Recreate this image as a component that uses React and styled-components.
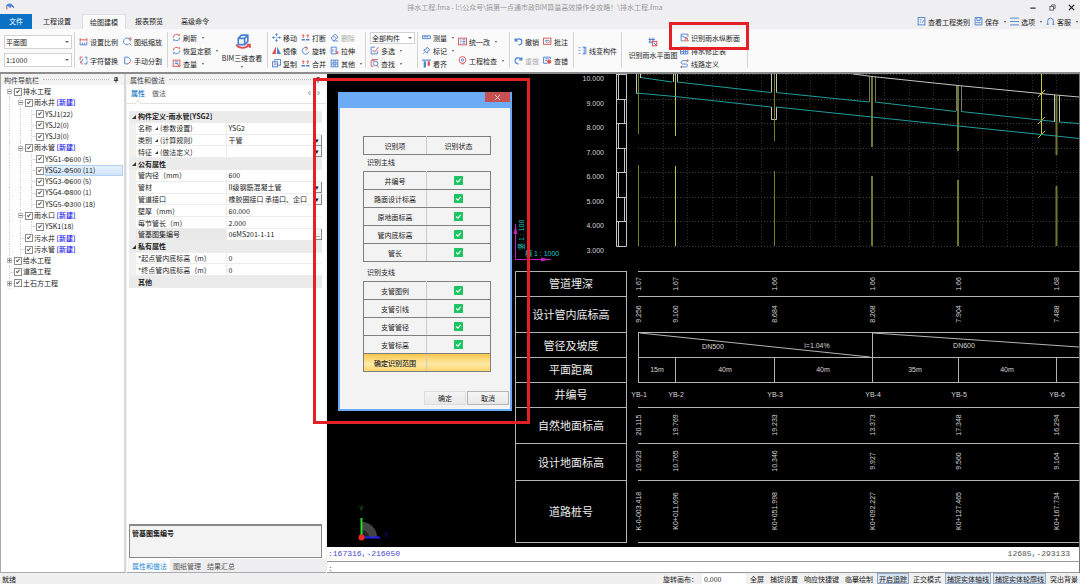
import React from "react";
import styled, { createGlobalStyle, css } from "styled-components";

const Global = createGlobalStyle`
  *, *::before, *::after { box-sizing: border-box; }
  body { margin: 0; background: #f1f1f2; }
  body, button, input, select, table {
    font-family: "Noto Sans CJK SC", "Noto Sans", sans-serif;
    font-size: 7px; line-height: 10px; color: #222;
  }
  button { background: none; border: 0; padding: 0; margin: 0; white-space: nowrap; }
`;

/* ---------- shell ---------- */
const Window = styled.div`
  min-height: 100vh; display: flex; flex-direction: column; position: relative;
`;
const TitleBar = styled.header`
  height: 14px; display: grid; grid-template-columns: 1fr auto 1fr; align-items: center;
  padding: 0 5px; background: #efeff1;
`;
const Title = styled.h1`
  margin: 0 10px 0 0; font-size: 7px; font-weight: 400; line-height: 14px; color: #999; white-space: nowrap;
`;
const WindowControls = styled.div`
  display: flex; justify-content: flex-end; gap: 11px;
  button { width: 8px; height: 10px; display: grid; place-items: center; }
`;
const TabBar = styled.nav`
  height: 15px; display: flex; align-items: stretch; background: #efeff1;
`;
const MenuTab = styled.button`
  width: ${(p) => p.$w}px; line-height: 15px; text-align: center;
  ${(p) => p.$kind === "file" && css`background: #0a72c5; color: #fff;`}
  ${(p) => p.$kind === "active" && css`background: #fafafb; border: 1px solid #dfdfe1; border-bottom: 0; line-height: 14px;`}
`;
const QuickActions = styled.div`
  margin-left: auto; display: flex; align-items: center; gap: 4px; padding-right: 2px;
`;
const Caret = styled.span`
  display: inline-block; border: 1px solid transparent; border-top: 2px solid #555; border-bottom: 0;
  margin-left: ${(p) => p.$gap ?? 3}px; align-self: center;
`;

/* ---------- ribbon ---------- */
const Ribbon = styled.div`
  height: 45px; display: flex; background: #fafafb; border-bottom: 2px solid #8c8c8c;
`;
const Group = styled.div`
  position: relative; width: ${(p) => p.$w}px; flex: none; display: flex; align-items: flex-start;
  padding: 0 0 0 4px;
  &::after { content: ""; position: absolute; right: 0; top: 3px; height: 36px; border-right: 1px solid #d4d4d6; }
`;
const ToolGrid = styled.div`
  display: grid; grid-template-columns: ${(p) => p.$cols || "auto"};
  grid-auto-rows: ${(p) => (p.$rows === 3 ? 13 : 19)}px;
  padding-top: ${(p) => (p.$rows === 3 ? 2 : 3)}px;
  width: ${(p) => (p.$w ? p.$w + "px" : "auto")};
`;
const ToolButton = styled.button`
  display: flex; align-items: center; gap: 2px; color: ${(p) => (p.$dim ? "#aaa" : "#222")};
  svg { flex: none; }
`;
const BigTool = styled.button`
  width: ${(p) => p.$w}px; flex: none; display: flex; flex-direction: column; align-items: center; gap: ${(p) => p.$gap}px;
  padding-top: ${(p) => p.$top}px;
`;
const Selects = styled.div`
  display: flex; flex-direction: column; gap: 4px; padding-top: 6px; flex: 1; margin-right: 2px;
`;
const SelectBox = styled.span`
  position: relative; display: block; width: ${(p) => p.$w || "68px"}; margin-top: ${(p) => p.$top || 0}px;
  select {
    appearance: none; display: block; width: 100%; height: ${(p) => p.$h || 14}px; border: 1px solid #d2d2d4;
    border-radius: 0; background: #fff; padding: 0 1px; outline: 0;
  }
  &::after {
    content: ""; position: absolute; right: 3px; top: 45%; border: 2px solid transparent;
    border-top-color: #666; border-bottom: 0; pointer-events: none;
  }
`;
const Mark = styled.div`
  position: absolute; left: ${(p) => p.$x}px; top: ${(p) => p.$y}px; width: ${(p) => p.$w}px; height: ${(p) => p.$h}px;
  border: 3px solid #e51f26; pointer-events: none; z-index: 5;
`;

/* ---------- workspace ---------- */
const Workspace = styled.main`
  flex: 1; display: grid; grid-template-columns: 127px 200px minmax(0, 1fr);
`;
const PanelHead = styled.h2`
  margin: 0; height: 11px; display: flex; align-items: center; gap: 4px; padding: 0 5px 0 3px;
  font-size: 7px; font-weight: 400; line-height: 10px; background: #f2f2f3; white-space: nowrap; color: #444;
  &::before { content: ""; order: 1; flex: 1; border-top: 1px dotted #bbb; }
  svg { order: 2; }
`;
const TreePanel = styled.section`
  background: #fff; border: solid #aaa; border-width: 0 2px 1px 1px; border-right-color: #d5d8dc; margin-right: 1px;
`;
const Tree = styled.ul`
  margin: 0; padding: 1px 0 0; list-style: none; height: 204px; display: grid; grid-auto-rows: 1fr;
`;
const TreeRow = styled.li`
  position: relative; display: flex; align-items: center; white-space: nowrap;
  padding-left: ${(p) => 13 + p.$level * 11}px;
  &::before {
    content: ""; position: absolute; left: ${(p) => 8 + p.$level * 11}px; top: 0; bottom: 0; width: 5px;
    border-left: 1px dotted #d0d0d0;
    background: linear-gradient(#dcdcdc, #dcdcdc) center / 100% 1px no-repeat;
  }
`;
const Guide = styled.i`
  position: absolute; top: 0; bottom: 0; left: ${(p) => 8 + p.$n * 11}px; border-left: 1px dotted #d0d0d0;
`;
const Expander = styled.button`
  && { position: absolute; left: ${(p) => 6 + p.$level * 11}px; }
  width: 5px; height: 5px; border: 1px solid #bbb; background: #fff; z-index: 1;
  &::before { content: ""; position: absolute; left: 0; right: 0; top: 1px; border-top: 1px solid #777; }
  ${(p) => !p.$open && css`&::after { content: ""; position: absolute; top: 0; bottom: 0; left: 1px; border-left: 1px solid #777; }`}
`;
const NodeLabel = styled.label`
  display: flex; align-items: center; flex: 1; gap: 1px; height: 100%;
  span { flex: 1; display: block; height: 100%; line-height: 11px; margin-right: 1px;
    ${(p) => p.$on && css`background: linear-gradient(#e6f1fc, #cfe4fa); box-shadow: inset 0 0 0 1px #b3d2f2;`} }
  b { color: #1414ee; font-weight: 500; }
`;
const Check = styled.input.attrs({ type: "checkbox" })`
  appearance: none; margin: 0; width: 8px; height: 8px; border: 1px solid #8c8c8c; background: #fff; position: relative; flex: none;
  &:checked::after {
    content: ""; position: absolute; left: 2px; top: 0; width: 2px; height: 4px;
    border: solid #555; border-width: 0 1px 1px 0; transform: rotate(40deg);
  }
`;
const PropPanel = styled.section`
  background: #fff; display: flex; flex-direction: column; border-bottom: 1px solid #aaa; margin-right: 1px;
`;
const PropTabs = styled.div`
  height: 19px; display: flex; align-items: flex-start; gap: 7px; padding: 3px 4px 0; margin-bottom: 7px;
  border-bottom: 1px solid #e2e2e2; position: relative;
  &::after {
    content: ""; position: absolute; left: 8px; bottom: -4px; width: 6px; height: 6px; background: #fff;
    border: solid #e2e2e2; border-width: 1px 0 0 1px; transform: rotate(45deg);
  }
  button { color: #555; }
  button[aria-selected="true"] { color: #1479c9; font-weight: 500; }
  span { margin-left: auto; display: flex; gap: 4px; padding-top: 2px; }
`;
const PropTable = styled.table`
  width: 193px; height: 177px; margin-left: 2px; border-collapse: separate; border-spacing: 0; table-layout: fixed;
  th, td {
    padding: 0; text-align: left; font-weight: 400; line-height: 10px; white-space: nowrap;
    border-bottom: 1px solid #ececec;
  }
  th { width: 96px; border-left: 7px solid #f0f0f0; padding-left: 2px; }
  td { border-left: 1px solid #ececec; padding-left: 2px; position: relative; }
`;
const SectionRow = styled.tr`
  && { background: #ebebec; }
  && th { font-weight: 600; border-left: 0; padding-left: 9px; position: relative; }
  && th::before {
    content: ""; position: absolute; left: 3px; top: 4px; border-top: 4px solid transparent;
    border-right: 4px solid #333; display: ${(p) => (p.$bare ? "none" : "block")};
  }
`;
const PropRow = styled.tr`
  && th { background: ${(p) => (p.$on ? "#e9e9ea" : "#fff")}; }
`;
const Tri = styled.i`
  display: inline-block; border-top: 3px solid transparent; border-right: 3px solid #333; margin: 0 2px 1px 3px;
`;
const CellButton = styled.button`
  && { position: absolute; right: 0; top: 0; width: 9px; height: 11px; background: #f4f4f4; }
  border: solid #888; border-width: 0 1px 1px 0; line-height: 8px; font-size: 7px;
`;
const HelpBox = styled.div`
  margin: auto 4px 1px 2px; height: 34px; flex: none; background: #f3f3f4; border: 1px solid #8a8a8a;
  border-top-width: 2px; padding: 2px; font-weight: 600;
`;
const DockTabs = styled.div`
  height: 13px; display: flex; background: #eeeef0; padding-left: 1px; margin-left: 1px;
  button { padding: 0 3px; color: #555; }
  button[aria-selected="true"] { background: #fff; color: #1a87d0; }
`;

/* ---------- drawing area ---------- */
const CanvasColumn = styled.section`
  position: relative; display: flex; flex-direction: column; background: #000; min-width: 0; border-right: 1px solid #777;
`;
const Drawing = styled.svg`
  display: block; width: 100%; flex: 1; min-height: 0;
  text { font-family: "Liberation Sans", "Noto Sans CJK SC", sans-serif; font-size: 7px; fill: #d6d6d6; }
  .caption { font-family: "Noto Sans CJK SC", sans-serif; font-size: 11px; fill: #eee; }
`;
const CommandLine = styled.div`
  height: ${(p) => p.$h}px; background: #fff; border-bottom: 1px solid #999; display: flex; justify-content: space-between;
  padding: 1px 9px 0 1px; font-family: "Liberation Mono", monospace; font-size: 8px; line-height: 11px; color: #555;
  output:first-child, label { color: #4a4ad0; }
  label { display: flex; flex: 1; }
  input { border: 0; padding: 0; flex: 1; outline: 0; height: 9px; }
`;
const StatusBar = styled.footer`
  height: 11px; display: flex; align-items: center; background: #f0f0f1; padding: 0 0 0 2px; white-space: nowrap; gap: 2px;
  label { margin-left: auto; display: flex; align-items: center; gap: 4px; }
  input { width: 44px; height: 10px; border: 0; background: #fff; padding: 0 2px; }
`;
const StatusButton = styled.button`
  height: 11px; padding: 0 2px; line-height: 10px; flex: none;
  ${(p) => p.$on && css`background: #d8e4f0; box-shadow: inset 0 0 0 1px #91a9c4;`}
`;

/* ---------- dialog ---------- */
const Dialog = styled.section`
  position: absolute; left: 11px; top: 18px; width: 174px; background: #f3f3f4; border: solid #6baaf4;
  border-width: 0 2px 2px; z-index: 3; padding-bottom: 4px;
  display: flex; flex-direction: column;
`;
const DialogBar = styled.div`
  height: 16px; background: #6cabf6; display: flex; justify-content: flex-end; margin-bottom: 28px;
`;
const Close = styled.button`
  && { width: 25px; height: 10px; background: #c75052; color: #fff; display: grid; place-items: center; }
`;
const ResultTable = styled.table`
  margin: 0 19px 0 23px; border-collapse: collapse; table-layout: fixed;
  th, td { padding: 0; height: 18px; border: 1px solid #808080; border-left-color: #ccc; border-right-color: #ccc;
    text-align: center; font-weight: 400; color: #222; line-height: 10px; }
  tr > :first-child { border-left-color: #808080; width: 63px; }
  tr > :last-child { border-right-color: #808080; }
  svg { display: block; margin: 0 auto; }
`;
const RangeRow = styled.tr`
  background: linear-gradient(#fbc64a, #ffe9a8 55%, #fdd262);
  && th { font-weight: 500; }
`;
const Caption = styled.p`
  margin: 0 0 0 27px; height: ${(p) => p.$h}px; line-height: ${(p) => p.$lh}px;
`;
const DialogActions = styled.div`
  display: flex; justify-content: flex-end; gap: 1px; margin-top: 19px; padding-right: 1px;
  button { width: 42px; height: 14px; background: linear-gradient(#f5f5f5, #e9e9e9); border: 1px solid #dcdcdc; }
  button + button { border-color: #b5b5b5; }
`;

/* ---------- icons ---------- */
const B = "#4a80d0";
const R = "#dc4f50";
const shapes = {
  ruler: <><path d="M2 2v6M14 2v6M2 5h12" stroke={R} /><path d="M2 9v5h12V9M6 10v4M10 10v4" stroke={B} /></>,
  zoom: <><path d="M10 13A6 6 0 1 1 13 8" stroke={B} /><path d="M11 11l4 4" stroke={B} /><path d="M14 1v5M11 3l3-2" stroke={R} /></>,
  swap: <><path d="M6 2H2v5M3 13V9M7 14H4" stroke={R} /><path d="M10 2h4v5M14 9v5H9M7 5l-3 7" stroke={B} /></>,
  sheet: <><path d="M9 14H3V2h6l4 4v3" stroke={B} /><path d="M8 14l6-4" stroke={R} /></>,
  refresh: <><path d="M2 8a6 6 0 0 1 11-3V2" stroke={R} /><path d="M14 8a6 6 0 0 1-11 3v3" stroke={B} /></>,
  list: <><rect x="2" y="2" width="12" height="11" stroke={R} /><path d="M5 5h6M5 8h6" stroke={B} /><path d="M9 9l5 5" stroke={R} /></>,
  cube: <><path d="M4 5l3-3h6v6l-3 3H4zM4 5h6v6M10 5l3-3" stroke={B} /><path d="M2 11c3 4 9 4 13 0M12 11h3v3" stroke={R} /></>,
  move: <><path d="M8 1v5M8 10v5M1 8h5M10 8h5M6 3l2-2 2 2M6 13l2 2 2-2M3 6L1 8l2 2M13 6l2 2-2 2" stroke={B} /></>,
  breakk: <><path d="M1 12h6M9 12h6" stroke={B} strokeWidth="3" /><path d="M4 9V3M2 5l2-2 2 2M12 9V3M10 5l2-2 2 2" stroke={R} /></>,
  eraser: <><path d="M2 9l7-7 5 5-6 6H5zM6 5l5 5M5 14h9" stroke={B} /></>,
  mirror: <><path d="M7 1v13H0z" fill={R} stroke="none" /><path d="M9 1v13h7z" fill={B} stroke="none" /></>,
  rotate: <><path d="M12 4a6 6 0 1 0 2 6" stroke={B} /><path d="M8 1l4 3-4 3" stroke={R} /></>,
  stretch: <><path d="M2 2h9v12H2zM5 5v6" stroke={B} /><path d="M9 8l5 5M14 9v4h-4" stroke={R} /></>,
  copy: <><rect x="5" y="1" width="10" height="10" stroke={B} /><rect x="1" y="5" width="9" height="9" stroke={B} fill="#dce8f8" /><path d="M4 9h4" stroke={R} /></>,
  grid: <><rect x="2" y="2" width="5" height="5" stroke={B} /><rect x="9" y="2" width="5" height="5" stroke={B} /><rect x="2" y="9" width="5" height="5" stroke={B} /><rect x="9" y="9" width="5" height="5" stroke={B} /></>,
  select: <><path d="M9 2H2v12h11V9" stroke={B} /><path d="M5 7l3 4 7-9" stroke={R} /></>,
  find: <><path d="M8 3H2v10h4" stroke={R} /><circle cx="10" cy="8" r="4" stroke={B} /><path d="M12 11l3 4M3 1h11" stroke={R} /></>,
  measure: <><path d="M1 5h14v5H1zM4 5v3M7 5v3M10 5v3" stroke={B} /></>,
  pin: <><path d="M9 2l5 5-3 1-2 5-6-6 5-2zM5 11l-3 3" stroke={B} /></>,
  align: <><path d="M0 2h16" stroke={B} strokeWidth="2" /><path d="M5 4v11" stroke={B} strokeWidth="4" /><path d="M12 4v8" stroke={R} strokeWidth="4" /></>,
  unify: <><rect x="1" y="2" width="14" height="12" stroke={R} /><path d="M4 5h2M8 5h5M4 8h2M8 8h5M4 11h2M8 11h5" stroke={B} /></>,
  inspect: <><circle cx="8" cy="7" r="6" stroke={R} /><circle cx="8" cy="7" r="2" stroke={B} /><path d="M6 14h5" stroke={R} /></>,
  undo: <><path d="M2 7c4-6 12-4 12 1 0 4-3 6-6 6M2 2v5h5" stroke={B} strokeWidth="2" /></>,
  redo: <><path d="M14 7C10 1 2 3 2 8c0 4 3 6 6 6M14 2v5H9" stroke={B} strokeWidth="2" /></>,
  note: <><rect x="1" y="2" width="13" height="11" stroke={R} /><path d="M4 6h7M4 9h4" stroke={B} /><path d="M9 11l5-5" stroke={R} /></>,
  inquiry: <><path d="M8 13H1V2h12v4M4 5h6M4 8h3" stroke={B} /><circle cx="11" cy="10" r="3" fill={R} stroke={R} /></>,
  convert: <><path d="M1 3h4M1 8h4M1 13h4" stroke={B} strokeDasharray="2 1" /><path d="M8 2h6v12H8M11 2v12" stroke={B} /></>,
  plan: <><path d="M1 4h10M3 1v9M8 1v6M1 8h6" stroke={B} /><rect x="7" y="7" width="7" height="7" stroke={R} /><path d="M9 9l4 4" stroke={B} /></>,
  section: <><path d="M7 14H2V2h12v5M2 5l12 5" stroke={B} /><path d="M8 14l3-6 4 6z" stroke={R} /></>,
  table: <><rect x="1" y="2" width="13" height="12" stroke={B} /><path d="M1 6h13M1 10h13M6 2v12M10 2v12" stroke={B} /></>,
  route: <><path d="M14 3H5a3 3 0 0 0 0 6h6a2 2 0 0 1 0 5H2" stroke={B} /><path d="M12 1l3 2-3 2M4 12l-3 2 3 2" stroke={R} /></>,
  category: <><rect x="2" y="1" width="12" height="13" stroke={B} /><path d="M5 5h3M5 9h2M9 10l4-5" stroke={B} /></>,
  save: <><path d="M2 1h12v13H2zM5 1v5h6V1M4 10h8" stroke={B} /></>,
  options: <><path d="M0 2h16M0 8h16M0 14h16" stroke={B} /></>,
  service: <><path d="M3 13V7a5 5 0 0 1 10 0v6M1 13h4M11 13h4" stroke={B} /></>,
  logo: <><path d="M2 7C5 1 12 2 14 9l-4-3-2 3c-1-3-4-3-6-2z" fill={B} stroke={B} /><path d="M3 8v4" stroke={R} /></>,
  min: <path d="M1 11h14" stroke="#222" strokeWidth="3" />,
  restore: <><rect x="2" y="6" width="8" height="8" stroke="#333" /><path d="M6 5V2h8v8h-3" stroke="#333" /></>,
  close: <path d="M2 2l12 12M14 2L2 14" stroke="currentColor" strokeWidth="3" />,
  closeThin: <path d="M2 2l12 12M14 2L2 14" stroke="#fff" />,
  tack: <path d="M5 1h6v8H5zM2 9h12M8 9v6M10 1v8" stroke="#222" strokeWidth="2" />,
  left: <path d="M11 3L5 8l6 5z" stroke="#888" />,
  right: <path d="M5 3l6 5-6 5z" stroke="#888" />,
  tick: <><rect width="16" height="16" rx="1" fill="#1dc45f" stroke="none" /><path d="M4 8l3 3 5-6" stroke="#fff" strokeWidth="2" /></>,
};
const Icon = ({ name, size = 9 }) => (
  <svg width={size} height={size} viewBox="0 0 16 16" fill="none" strokeWidth="1.6" aria-hidden="true">{shapes[name]}</svg>
);
const Tool = ({ icon, label, caret, dim }) => (
  <ToolButton $dim={dim}><Icon name={icon} />{label}{caret && <Caret />}</ToolButton>
);
const Pick = ({ label, value, ...rest }) => (
  <SelectBox {...rest}><select aria-label={label} defaultValue={value}><option>{value}</option></select></SelectBox>
);

/* ---------- data ---------- */
const tree = [
  [0, "排水工程", false, "open"], [1, "雨水井", true, "open"], [2, "YSJ1(22)"], [2, "YSJ2(0)"], [2, "YSJ3(0)"],
  [1, "雨水管", true, "open"], [2, "YSG1-Φ600 (5)"], [2, "YSG2-Φ500 (11)"], [2, "YSG3-Φ600 (5)"], [2, "YSG4-Φ800 (1)"],
  [2, "YSG5-Φ300 (18)"], [1, "雨水口", true, "open"], [2, "YSK1(18)"], [1, "污水井", true], [1, "污水管", true],
  [0, "给水工程", false, "closed"], [0, "道路工程"], [0, "土石方工程", false, "closed"],
];
const props = [
  { section: "构件定义-雨水管[YSG2]" },
  { name: "名称", extra: "(参数设置)", value: "YSG2" },
  { name: "类别", extra: "(计算规则)", value: "干管", button: "▾" },
  { name: "特征", extra: "(做法定义)", value: "", button: "▾" },
  { section: "公有属性" },
  { name: "管内径（mm）", value: "600" },
  { name: "管材", value: "II级钢筋混凝土管", button: "▾" },
  { name: "管道接口", value: "橡胶圈接口 承插口、企口", button: "▾" },
  { name: "壁厚（mm）", value: "60.000" },
  { name: "每节管长（m）", value: "2.000" },
  { name: "管基图集编号", value: "06MS201-1-11", button: "...", on: true },
  { section: "私有属性" },
  { name: "*起点管内底标高（m）", value: "0" },
  { name: "*终点管内底标高（m）", value: "0" },
  { section: "其他", bare: true },
];
const stations = [638, 675, 774, 872, 958, 1056];
const profile = [
  { y: 284, values: ["1.67", "1.67", "1.66", "1.66", "1.66", "1.68"] },
  { y: 314, values: ["9.256", "9.100", "8.684", "8.268", "7.904", "7.488"] },
  { y: 425, values: ["20.115", "19.769", "19.233", "13.373", "17.348", "16.294"] },
  { y: 461, values: ["10.923", "10.765", "10.346", "9.927", "9.560", "9.164"] },
  { y: 511, values: ["K-0-003.418", "K0+011.696", "K0+051.998", "K0+092.227", "K0+127.465", "K0+167.734"] },
];
const captions = [
  ["管道埋深", 284], ["设计管内底标高", 315], ["管径及坡度", 346], ["平面距离", 370], ["井编号", 395],
  ["自然地面标高", 426], ["设计地面标高", 463], ["道路桩号", 512],
];
const rules = [271, 296, 332, 357, 382, 407, 443, 480, 542];
const levels = [74, 99, 123, 148, 172, 197, 221, 246];

const Profile = () => (
  <Drawing viewBox="327 74 752 473" preserveAspectRatio="xMinYMin meet" role="img" aria-label="雨水纵断面">
    <g stroke="#3c3c3c" strokeDasharray="1 2" fill="none">
      {Array.from({ length: 17 }, (_, i) => Math.round(662.6 + i * 24.6)).map((x) => <path key={x} d={`M${x}.5 74V246`} stroke="#2e2e2e" />)}
      {levels.map((y) => <path key={y} d={`M638 ${y}.5H1079`} />)}
    </g>
    <g stroke="#c4c4c4" fill="none">
      <path d="M616.5 74V246.5H626.5V74" />
      {levels.slice(0, 7).map((y, i) => (
        <path key={y} d={`M616.5 ${y}.5H626.5M${i % 2 ? 624.5 : 618.5} ${y}V${levels[i + 1]}`} />
      ))}
      <path d="M636.5 74V93.5H639M640.5 74V78M673.5 74V82M677.5 74V82M771.5 74V92.5M776.5 74V92.5M771.5 107V119.5H776.5V107M1054.5 95V122M1059.5 95V122" />
      <path d="M869.5 77V102M875.5 77V102M956.5 86V111M961.5 86V111" stroke="#777" />
      <path d="M853 74L872 76.5L958 85.5L1056 95L1079 97" />
    </g>
    <g stroke="#7c7c22" strokeWidth="1">
      <path d="M638.5 74V134M638.5 165V246M774.5 74V141M774.5 171V246" />
      <path d="M675.5 74V136M675.5 166V246" stroke="#c2c250" />
      <path d="M872 77V147M872 176V246M958 86V151M958 180V246M1056.5 95V155M1056.5 186V246" strokeWidth="2" stroke="#73762f" />
      <path d="M1041.5 74V135M1038 97L1045 90M1038 124L1045 117M1038 138L1045 131" stroke="#c8c832" />
    </g>
    <g stroke="#229c9c" fill="none">
      <path d="M641 77.5L672 82M677 82L771 92.5M776 92.5L869 102M875 102L956 111.5M961 111.5L1054 121.5M1059 122L1079 123.5" />
      <path d="M636 93L675 96.5L771 107M776 107L872 117L958 126L1056 136L1079 138.5" />
    </g>
    {levels.map((y, i) => <text key={y} x="604" y={y + 7} textAnchor="end">{`${10 - i}.000`}</text>)}

    <g stroke="#c020c0" fill="#c020c0"><path d="M515.5 224V259.5H551" fill="none" /><path d="M515.5 225l2 9h-4zM550 259.5l-9-2v4z" stroke="none" /></g>
    <text transform="translate(524 250) rotate(-90)" style={{ fill: "#20c8c8" }}>竖 1 : 100</text>
    <text x="525" y="256" style={{ fill: "#20c8c8" }}>横 1 : 1000</text>

    <g stroke="#b4b4b4" fill="none">
      <path d="M515.5 271.5V542.5M626.5 271.5V542.5M638.5 332V382M872.5 332V382M675.5 357V382M774.5 357V382M958.5 357V382M1056.5 357V382" />
      {rules.map((y) => <path key={y} d={`M515.5 ${y}.5H627M638 ${y}.5H1079`} />)}
      <path d="M640 333L870 357M873 333L1079 347" />
    </g>
    {captions.map(([t, y]) => <text key={t} className="caption" x="571" y={y + 4} textAnchor="middle">{t}</text>)}
    {profile.map((row) => row.values.map((v, i) => (
      <text key={row.y + v + i} transform={`translate(${stations[i] + 3} ${row.y}) rotate(-90)`} textAnchor="middle">{v}</text>
    )))}
    {stations.map((x, i) => <text key={x} x={x + 1} y="397" textAnchor="middle">{`YB-${i + 1}`}</text>)}
    {[[657, "15m"], [725, "40m"], [823, "40m"], [915, "35m"], [1007, "40m"]].map(([x, t]) => (
      <text key={x} x={x} y="372" textAnchor="middle">{t}</text>
    ))}
    <text x="713" y="349" textAnchor="middle">DN500</text>
    <text x="817" y="348" textAnchor="middle">i=1.04%</text>
    <text x="964" y="348" textAnchor="middle">DN600</text>

    <path d="M362 522a15 15 0 0 1 15 15h-15z" fill="#444" />
    <path d="M362 530a7 7 0 0 1 7 7h-7z" fill="#252525" />
    <path d="M361.5 518V536" stroke="#22dd22" strokeWidth="2" />
    <path d="M363 537.5H380" stroke="#2222f0" strokeWidth="2" />
    <circle cx="361.5" cy="537.5" r="3" fill="#f02a20" />
    <text x="359" y="511" style={{ fill: "#128012" }}>Y</text>
    <text x="384" y="537" style={{ fill: "#101088" }}>X</text>
  </Drawing>
);

const ResultRows = ({ items }) => items.map((t) => (
  <tr key={t}><th scope="row">{t}</th><td aria-label="已识别"><Icon name="tick" /></td></tr>
));

export default function App() {
  return (
    <Window>
      <Global />
      <TitleBar>
        <Icon name="logo" size={10} />
        <Title>排水工程.fma - I:\公众号\搞第一点通市政BIM算量高效操作全攻略！\排水工程.fma</Title>
        <WindowControls>
          <button aria-label="最小化"><Icon name="min" size={6} /></button>
          <button aria-label="还原"><Icon name="restore" size={7} /></button>
          <button aria-label="关闭"><Icon name="close" size={7} /></button>
        </WindowControls>
      </TitleBar>
      <TabBar>
        <MenuTab $w={32} $kind="file">文件</MenuTab>
        <MenuTab $w={50}>工程设置</MenuTab>
        <MenuTab $w={44} $kind="active">绘图建模</MenuTab>
        <MenuTab $w={46}>报表预览</MenuTab>
        <MenuTab $w={46}>高级命令</MenuTab>
        <QuickActions>
          <Tool icon="category" label="查看工程类别" />
          <Tool icon="save" label="保存" caret />
          <Tool icon="options" label="选项" caret />
          <Tool icon="service" label="客服" caret />
        </QuickActions>
      </TabBar>

      <Ribbon>
        <Group $w={75}>
          <Selects>
            <Pick label="视图" value="平面图" />
            <Pick label="比例" value="1:1000" />
          </Selects>
        </Group>
        <Group $w={93}>
          <ToolGrid $cols="44px 44px">
            <Tool icon="ruler" label="设置比例" /><Tool icon="zoom" label="图纸缩放" />
            <Tool icon="swap" label="字符替换" /><Tool icon="sheet" label="手动分割" />
          </ToolGrid>
        </Group>
        <Group $w={100}>
          <ToolGrid $rows={3} $w={48}>
            <Tool icon="refresh" label="刷新" caret />
            <Tool icon="refresh" label="恢复定额" caret />
            <Tool icon="list" label="查量" caret />
          </ToolGrid>
          <BigTool $w={44} $top={4} $gap={3}><Icon name="cube" size={17} />BIM三维查看<Caret $gap={0} /></BigTool>
        </Group>
        <Group $w={98}>
          <ToolGrid $rows={3} $cols="29px 29px 32px">
            <Tool icon="move" label="移动" /><Tool icon="breakk" label="打断" /><Tool icon="eraser" label="删除" dim />
            <Tool icon="mirror" label="镜像" /><Tool icon="rotate" label="旋转" /><Tool icon="stretch" label="拉伸" />
            <Tool icon="copy" label="复制" /><Tool icon="breakk" label="合并" /><Tool icon="grid" label="其他" caret />
          </ToolGrid>
        </Group>
        <Group $w={52}>
          <ToolGrid $rows={3}>
            <Pick label="构件范围" value="全部构件" $w="45px" $h={12} $top={1} />
            <Tool icon="select" label="多选" caret />
            <Tool icon="find" label="查找" caret />
          </ToolGrid>
        </Group>
        <Group $w={92}>
          <ToolGrid $rows={3} $w={36}>
            <Tool icon="measure" label="测量" caret />
            <Tool icon="pin" label="标记" caret />
            <Tool icon="align" label="看齐" />
          </ToolGrid>
          <ToolGrid>
            <Tool icon="unify" label="统一改" caret />
            <Tool icon="inspect" label="工程检查" caret />
          </ToolGrid>
        </Group>
        <Group $w={64}>
          <ToolGrid $cols="29px 29px">
            <Tool icon="undo" label="撤销" /><Tool icon="note" label="批注" />
            <Tool icon="redo" label="重做" dim /><Tool icon="inquiry" label="查错" />
          </ToolGrid>
        </Group>
        <Group $w={48}>
          <ToolGrid $cols="auto" $rows={3}>
            <span />
            <Tool icon="convert" label="线变构件" />
          </ToolGrid>
        </Group>
        <Group $w={126}>
          <BigTool $w={54} $top={8} $gap={3}><Icon name="plan" size={10} />识别雨水平面图</BigTool>
          <ToolGrid $rows={3}>
            <Tool icon="section" label="识别雨水纵断面" />
            <Tool icon="table" label="排水修正表" />
            <Tool icon="route" label="线路定义" />
          </ToolGrid>
          <Mark $x={47} $y={-7} $w={80} $h={28} />
        </Group>
      </Ribbon>

      <Workspace>
        <TreePanel>
          <PanelHead>构件导航栏<Icon name="tack" size={6} /></PanelHead>
          <Tree>
            {tree.map(([level, text, create, state]) => (
              <TreeRow key={text} $level={level}>
                {Array.from({ length: level }, (_, n) => <Guide key={n} $n={n} />)}
                {state && <Expander $level={level} $open={state === "open"} aria-label={text} />}
                <NodeLabel $on={text.startsWith("YSG2")}>
                  <Check defaultChecked />
                  <span>{text}{create && <> <b>[新建]</b></>}</span>
                </NodeLabel>
              </TreeRow>
            ))}
          </Tree>
        </TreePanel>

        <PropPanel>
          <PanelHead>属性和做法<Icon name="tack" size={6} /></PanelHead>
          <PropTabs role="tablist">
            <button role="tab" aria-selected="true">属性</button>
            <button role="tab" aria-selected="false">做法</button>
            <span><Icon name="left" size={6} /><Icon name="right" size={6} /></span>
          </PropTabs>
          <PropTable>
            <tbody>
              {props.map((p) => p.section ? (
                <SectionRow key={p.section} $bare={p.bare}><th colSpan={2}>{p.section}</th></SectionRow>
              ) : (
                <PropRow key={p.name} $on={p.on}>
                  <th scope="row">{p.name}{p.extra && <><Tri />{p.extra}</>}</th>
                  <td>{p.value}{p.button && <CellButton aria-label={p.name}>{p.button}</CellButton>}</td>
                </PropRow>
              ))}
            </tbody>
          </PropTable>
          <HelpBox>管基图集编号</HelpBox>
          <DockTabs role="tablist">
            <button role="tab" aria-selected="true">属性和做法</button>
            <button role="tab" aria-selected="false">图纸管理</button>
            <button role="tab" aria-selected="false">结果汇总</button>
          </DockTabs>
        </PropPanel>

        <CanvasColumn>
          <Profile />
          <CommandLine $h={15}><output>:167316,-216050</output><output>12685,-293133</output></CommandLine>
          <CommandLine $h={11}><label>:<input aria-label="命令" /></label></CommandLine>
          <Dialog role="dialog" aria-label="识别雨水纵断面">
            <DialogBar><Close aria-label="关闭"><Icon name="closeThin" size={7} /></Close></DialogBar>
            <ResultTable><thead><tr><th>识别项</th><th>识别状态</th></tr></thead></ResultTable>
            <Caption $h={16} $lh={14}>识别主线</Caption>
            <ResultTable><tbody><ResultRows items={["井编号", "路面设计标高", "原地面标高", "管内底标高", "管长"]} /></tbody></ResultTable>
            <Caption $h={19} $lh={20}>识别支线</Caption>
            <ResultTable>
              <tbody>
                <ResultRows items={["支管图例", "支管引线", "支管管径", "支管标高"]} />
                <RangeRow><th scope="row">确定识别范围</th><td /></RangeRow>
              </tbody>
            </ResultTable>
            <DialogActions><button>确定</button><button>取消</button></DialogActions>
          </Dialog>
          <Mark $x={-14} $y={4} $w={217} $h={346} />
        </CanvasColumn>
      </Workspace>

      <StatusBar>
        就绪
        <label>旋转画布：<input defaultValue="0.000" /></label>
        <StatusButton>全屏</StatusButton>
        <StatusButton>捕捉设置</StatusButton>
        <StatusButton>响应快捷键</StatusButton>
        <StatusButton>临摹绘制</StatusButton>
        <StatusButton $on>开启追踪</StatusButton>
        <StatusButton>正交模式</StatusButton>
        <StatusButton $on>捕捉实体轴线</StatusButton>
        <StatusButton $on>捕捉实体轮廓线</StatusButton>
        <StatusButton>突出背景</StatusButton>
      </StatusBar>
    </Window>
  );
}
